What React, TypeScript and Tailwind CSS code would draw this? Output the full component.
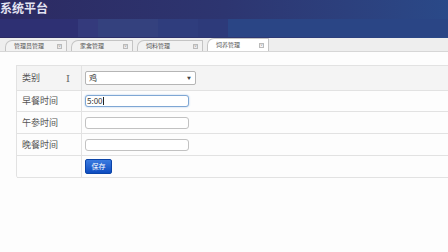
import React from "react";

const tabs = [
  { name: "管理员管理", w: 62, active: false },
  { name: "家禽管理", w: 62, active: false },
  { name: "饲料管理", w: 66, active: false },
  { name: "饲养管理", w: 62, active: true },
];

function Tab({ name, w, active }: { name: string; w: number; active: boolean }) {
  return (
    <div
      className={`relative flex h-[11px] items-center pl-[8px] pr-[4px] border border-b-0 border-[#c4c4c4] rounded-tl-[7px] rounded-tr-[1px] ${
        active ? "bg-white h-[13px]" : "bg-[#f2f2f2]"
      }`}
      style={{ width: w }}
    >
      <span className="text-[6px] leading-none text-[#555]">{name}</span>
      <span className="ml-auto flex h-[5px] w-[5px] items-center justify-center border border-[#bbb] text-[4px] leading-none text-[#888]">
        ×
      </span>
    </div>
  );
}

function Row({
  label,
  children,
  gray,
  extra,
  h,
}: {
  label: string;
  children: React.ReactNode;
  gray?: boolean;
  extra?: React.ReactNode;
  h: string;
}) {
  return (
    <div className={`flex ${h} border-b border-[#e2e2e2] ${gray ? "bg-[#f4f4f4]" : ""}`}>
      <div className="flex w-[65px] items-center border-r border-[#e2e2e2] pl-[5px] text-[9px] text-[#555]">
        {label}
        {extra}
      </div>
      <div className="flex flex-1 items-center pl-[3px]">{children}</div>
    </div>
  );
}

export default function App() {
  return (
    <div
      className="h-[252px] w-[448px] overflow-hidden bg-[#fdfdfd]"
      style={{ fontFamily: '"Noto Sans CJK SC", "Noto Sans", sans-serif' }}
    >
      {/* header */}
      <div className="h-[38px] bg-gradient-to-r from-[#2c2a62] via-[#2d3570] to-[#2a4988]">
        <div className="h-[14px] pl-0 text-[12px] font-bold leading-[16px] text-[#e4e4f2]">系统平台</div>
        <div className="mt-[5px] flex h-[18px]">
          <div className="w-[78px] bg-[#2e3073]" />
          <div className="w-[20px] bg-[#343a7c]" />
          <div className="w-[60px] bg-[#34417e]" />
          <div className="w-[40px] bg-[#2f3d7d]" />
          <div className="w-[30px] bg-[#2d3a7a]" />
          <div className="flex-1 bg-[#2a4585]" />
        </div>
      </div>
      {/* tab strip */}
      <div className="flex h-[14px] items-end gap-[4px] border-b border-[#d6d6d6] bg-[#eeeeee] pl-[5px]">
        {tabs.map((t) => (
          <Tab key={t.name} {...t} />
        ))}
      </div>
      {/* form */}
      <div className="ml-[16px] mt-[13px] rounded-bl-[3px] border-l border-t border-[#e2e2e2]">
        <Row
          h="h-[25px]"
          label="类别"
          gray
          extra={
            <span className="ml-[26px] text-[10px] text-[#666]" style={{ fontFamily: '"DejaVu Serif", serif' }}>
              I
            </span>
          }
        >
          <div className="relative flex h-[14px] w-[111px] items-center rounded-[2px] border border-[#b5b5b5] bg-white pl-[3px] text-[8px] text-[#333]">
            鸡
            <span className="absolute right-[4px] top-[3px] text-[4px] text-[#444]">▼</span>
          </div>
        </Row>
        <Row h="h-[21px]" label="早餐时间">
          <div className="flex h-[12px] w-[104px] items-center rounded-[3px] border border-[#7fa7d4] bg-white pl-[1px] text-[8px] text-[#333] shadow-[0_0_2px_#a9c6e8]">
            5:00<span className="h-[8px] w-px bg-[#222]" />
          </div>
        </Row>
        <Row h="h-[22px]" label="午参时间">
          <div className="h-[12px] w-[104px] rounded-[3px] border border-[#c2c2c2] bg-white" />
        </Row>
        <Row h="h-[22px]" label="晚餐时间">
          <div className="h-[12px] w-[104px] rounded-[3px] border border-[#c2c2c2] bg-white" />
        </Row>
        <Row h="h-[22px]" label="">
          <button className="flex h-[15px] w-[27px] items-center justify-center rounded-[2px] border border-[#0b44a8] bg-gradient-to-b from-[#3a7ae0] to-[#0d4cc0] text-[7px] text-white">
            保存
          </button>
        </Row>
      </div>
    </div>
  );
}
